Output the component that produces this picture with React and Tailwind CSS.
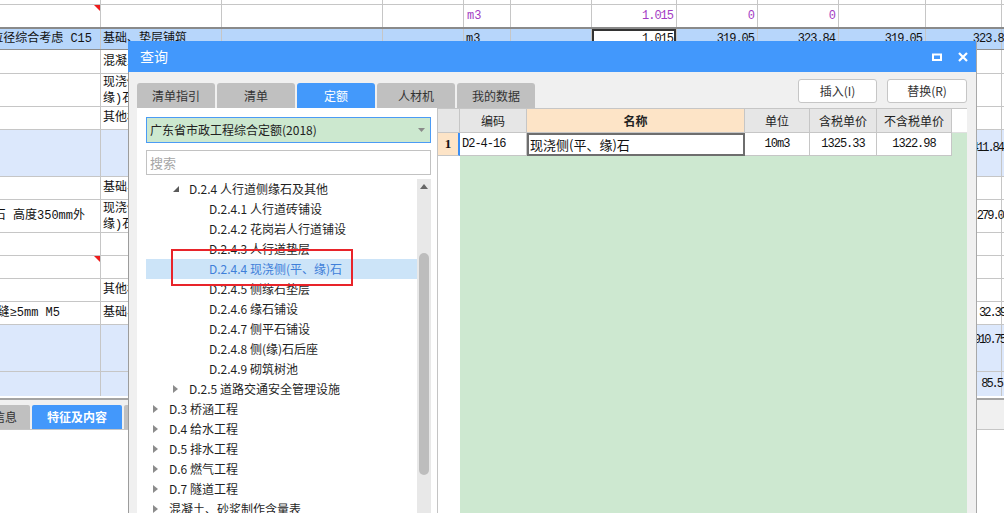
import React from 'react';

const CJK = "font-['Noto_Sans_CJK_SC',sans-serif]";
const BGTXT = "font-['Liberation_Mono','Noto_Sans_CJK_SC',monospace] text-[12px] text-[#111]";
const NUM = "font-['Liberation_Mono',monospace] text-[12px] tracking-[-1px]";
const NUMN = "font-['Liberation_Mono',monospace] text-[12px] tracking-[-2px]";

// columns of the sheet behind the dialog
const COLW = ['w-[101px]', 'w-[121px]', 'w-[161px]', 'w-[81px]', 'w-[47px]', 'w-[81px]', 'w-[85px]', 'w-[81px]', 'w-[81px]', 'w-[87px]', 'w-[76px]', 'w-[40px]'];

const RedMark = () => (
  <svg width="6" height="6" className="absolute top-0 right-0">
    <path d="M0 0 L6 0 L6 6 Z" fill="#ee1c1c" />
  </svg>
);

const L = (t, cls = '') => ({ t, cls: `items-center pl-[2px] ${cls}` });
const R = (t, cls = '') => ({ t: <span className={NUM}>{t}</span>, cls: `items-center justify-end pr-[3px] ${cls}` });
const P = (t) => ({ t: <span className={`${NUM} text-[#a33cc4]`}>{t}</span>, cls: 'items-center justify-end pr-[3px]' });
const TWO = (a, b) => ({ t: <><span>{a}</span><span>{b}</span></>, cls: 'flex-col pt-[1px] pl-[2px] leading-[16px]' });
// last visible column: numbers run up to / past the window edge
const EDGE = (t, mr, cls = 'items-center', font = NUMN) => ({ t: <span className={`${font} ${mr}`}>{t}</span>, cls: `justify-end overflow-visible ${cls}` });

const ROWS = [
  { h: 'h-[5px]', c: {} },
  { h: 'h-[24px]', b: 'border-b-2 border-[#8a8a8a]', c: { 0: { t: <RedMark />, cls: '' }, 4: { t: <span className="text-[#a33cc4]">m3</span>, cls: 'items-center pl-[3px]' }, 6: P('1.015'), 7: P('0'), 8: P('0') } },
  {
    h: 'h-[21px]', bg: 'bg-[#b7d6fb]', b: 'border-b border-[#8e8e8e]', c: {
      0: { t: '土碎石粒径综合考虑 C15', cls: 'items-center justify-end pr-[8px]' },
      1: { t: '基础、垫层铺筑', cls: 'items-center pl-[2px] overflow-visible' },
      4: L('m3'),
      6: { t: <span className={NUM}>1.015</span>, cls: 'items-center justify-end pr-[3px] bg-white ring-2 ring-inset ring-[#333]' },
      7: R('319.05'), 8: R('323.84'), 9: R('319.05'),
      10: EDGE('323.84', '-mr-[9px]', 'items-center', NUM),
    }
  },
  { h: 'h-[24px]', c: { 1: L('混凝土垫层'), 11: L('m') } },
  { h: 'h-[33px]', c: { 1: TWO('现浇侧(平、', '缘)石'), 11: L('m') } },
  { h: 'h-[23px]', c: { 1: L('其他材料费'), 11: L('m') } },
  { h: 'h-[47px]', bg: 'bg-[#dce8fc]', c: { 10: EDGE('411.84', '-mr-[2px]', 'pt-[9px]') } },
  { h: 'h-[23px]', c: { 1: L('基础、垫层'), 11: L('m') } },
  { h: 'h-[33px]', c: { 0: { t: '侧石 高度350mm外', cls: 'items-center justify-end pr-[15px]' }, 1: TWO('现浇侧(平、', '缘)石'), 10: EDGE('279.03', '-mr-[7px]') } },
  { h: 'h-[23px]', c: {} },
  { h: 'h-[23px]', c: { 0: { t: <RedMark />, cls: '' } } },
  { h: 'h-[23px]', c: { 1: L('其他材料费'), 11: L('m') } },
  { h: 'h-[23px]', c: { 0: { t: '勾缝≥5mm M5', cls: 'items-center justify-end pr-[40px]' }, 1: L('基础、垫层'), 10: EDGE('32.39', '-mr-[4px]') } },
  { h: 'h-[47px]', bg: 'bg-[#dce8fc]', c: { 10: EDGE('910.75', '-mr-[4px]', 'pt-[6px]') } },
  { h: 'h-[24px]', bg: 'bg-[#dce8fc]', b: 'border-b-0', c: { 10: EDGE('85.5', '-mr-[1px]') } },
];

const SheetRow = ({ row }) => (
  <div className={`flex shrink-0 ${row.h} ${row.bg || ''} ${row.b || 'border-b border-[#c6c6c6]'}`}>
    {COLW.map((w, i) => {
      const cell = row.c[i];
      return (
        <div key={i} className={`${w} shrink-0 h-full border-r border-[#c6c6c6] relative flex whitespace-nowrap ${cell && cell.cls.includes('overflow-visible') ? '' : 'overflow-hidden'} ${cell ? cell.cls : ''}`}>
          {cell && cell.t}
        </div>
      );
    })}
  </div>
);

const Sheet = () => (
  <div className={`flex flex-col w-[1004px] h-[513px] ${BGTXT}`}>
    {ROWS.map((r, i) => <SheetRow key={i} row={r} />)}
    <div className="h-[2px] bg-white shrink-0" />
    <div className="h-[2px] bg-[#a4a4a4] shrink-0" />
    {/* bottom tabs */}
    <div className={`h-[30px] shrink-0 bg-[#f0f0f0] border-b border-[#c6c6c6] pt-[5px] flex gap-[2px] ${CJK} text-[12px]`}>
      <div className="w-[50px] -ml-[20px] shrink-0 h-[24px] bg-[#c0c0c0] rounded-t-[2px] flex items-center justify-center text-[#333]">信息</div>
      <div className="w-[90px] shrink-0 h-[24px] bg-[#4398fb] rounded-t-[2px] flex items-center justify-center text-white font-bold">特征及内容</div>
      <div className="w-[90px] shrink-0 h-[24px] bg-[#c0c0c0] rounded-t-[2px]" />
    </div>
    <div className="flex-1 bg-white" />
  </div>
);

// ─── tree of the dialog ──────────────────────────────────────────────────────
const TREE = [
  { l: 2, e: 'open', t: 'D.2.4 人行道侧缘石及其他' },
  { l: 3, t: 'D.2.4.1 人行道砖铺设' },
  { l: 3, t: 'D.2.4.2 花岗岩人行道铺设' },
  { l: 3, t: 'D.2.4.3 人行道垫层' },
  { l: 3, t: 'D.2.4.4 现浇侧(平、缘)石', sel: true },
  { l: 3, t: 'D.2.4.5 侧缘石垫层' },
  { l: 3, t: 'D.2.4.6 缘石铺设' },
  { l: 3, t: 'D.2.4.7 侧平石铺设' },
  { l: 3, t: 'D.2.4.8 侧(缘)石后座' },
  { l: 3, t: 'D.2.4.9 砌筑树池' },
  { l: 2, e: 'closed', t: 'D.2.5 道路交通安全管理设施' },
  { l: 1, e: 'closed', t: 'D.3 桥涵工程' },
  { l: 1, e: 'closed', t: 'D.4 给水工程' },
  { l: 1, e: 'closed', t: 'D.5 排水工程' },
  { l: 1, e: 'closed', t: 'D.6 燃气工程' },
  { l: 1, e: 'closed', t: 'D.7 隧道工程' },
  { l: 1, e: 'closed', t: '混凝土、砂浆制作含量表' },
];

const INDENT = { 1: 'w-[7px]', 2: 'w-[27px]', 3: 'w-[47px]' };

const TreeItem = ({ item }) => (
  <div className={`h-[20px] flex items-center shrink-0 ${item.sel ? 'bg-[#cce4f8] text-[#3f7fd9]' : 'text-[#1f1f1f]'}`}>
    <div className={`${INDENT[item.l]} shrink-0`} />
    <div className="w-[16px] shrink-0 flex items-center">
      {item.e === 'closed' && (
        <svg width="5" height="8"><path d="M0 0 L5 4 L0 8 Z" fill="#8c8c8c" /></svg>
      )}
      {item.e === 'open' && (
        <svg width="6" height="6"><path d="M6 0 L6 6 L0 6 Z" fill="#5a5a5a" /></svg>
      )}
    </div>
    <span className="whitespace-nowrap leading-[20px]">{item.t}</span>
  </div>
);

const HEAD = [
  { t: '', w: 'w-[22px]' },
  { t: '编码', w: 'w-[67px]' },
  { t: '名称', w: 'w-[218px]', cls: 'bg-[#fde4c7] font-bold' },
  { t: '单位', w: 'w-[65px]' },
  { t: '含税单价', w: 'w-[67px]' },
  { t: '不含税单价', w: 'w-[75px]' },
];

const QueryDialog = () => (
  <div className={`absolute left-[128px] top-[41px] w-[849px] h-[500px] flex flex-col border-r border-[#a8a8a8] ${CJK}`}>
    {/* title bar */}
    <div className="h-[31px] shrink-0 bg-[#4298fc] flex items-center pl-[12px] pr-[8px]">
      <span className="text-white text-[14px]">查询</span>
      <div className="ml-auto flex items-center gap-[16px]">
        <svg width="10" height="8" viewBox="0 0 10 8">
          <rect x="1" y="1.5" width="8" height="5.5" fill="none" stroke="#fff" strokeWidth="2" />
        </svg>
        <svg width="10" height="10" viewBox="0 0 10 10">
          <path d="M1 1 L9 9 M9 1 L1 9" stroke="#fff" strokeWidth="2.2" />
        </svg>
      </div>
    </div>

    {/* body */}
    <div className="flex-1 flex flex-col bg-[#f0f0f0] border-l border-[#9c9c9c] pl-[8px] pr-[9px] min-h-0">
      <div className="h-[36px] shrink-0 pt-[7px] flex justify-between">
        <div className="flex gap-[2px] self-end text-[12px]">
          {['清单指引', '清单', '定额', '人材机', '我的数据'].map((t) => (
            <div key={t} className={`w-[78px] h-[25px] rounded-t-[3px] flex items-center justify-center ${t === '定额' ? 'bg-[#4399fb] text-white' : 'bg-[#c0c0c0] text-[#333]'}`}>{t}</div>
          ))}
        </div>
        <div className="flex gap-[10px] self-start text-[12px] text-[#333]">
          <button className="w-[79px] h-[24px] bg-white border border-[#c6c6c6] rounded-[3px]">插入(I)</button>
          <button className="w-[80px] h-[24px] bg-white border border-[#c6c6c6] rounded-[3px]">替换(R)</button>
        </div>
      </div>

      <div className="flex-1 flex min-h-0">
        {/* left: library + chapter tree */}
        <div className="w-[301px] shrink-0 bg-white border-r border-[#c4c4c4] pl-[9px] pr-[6px] pt-[9px] flex flex-col">
          <div className="h-[26px] shrink-0 bg-[#cce8cf] border border-[#4b9bf5] flex items-center pl-[3px] pr-[5px] text-[12px] text-[#222]">
            <span>广东省市政工程综合定额(2018)</span>
            <svg width="7" height="4" className="ml-auto"><path d="M0 0 L7 0 L3.5 4 Z" fill="#8a8a8a" /></svg>
          </div>
          <div className="h-[25px] mt-[7px] shrink-0 bg-white border border-[#c2c2c2] flex items-center px-[3px] text-[13px] text-[#a6a6a6]">搜索</div>
          <div className="mt-[4px] flex-1 flex relative min-h-0 text-[12px]">
            <div className="flex-1 flex flex-col overflow-hidden">
              {TREE.map((it) => <TreeItem key={it.t} item={it} />)}
            </div>
            <div className="w-[14px] shrink-0 bg-[#e8e8e8] flex flex-col items-center">
              <svg width="8" height="5" className="mt-[5px] shrink-0"><path d="M0 5 L4 0 L8 5 Z" fill="#666" /></svg>
              <div className="mt-[64px] w-[10px] h-[222px] shrink-0 rounded-full bg-[#bdbdbd]" />
            </div>
            {/* red annotation box */}
            <div className="absolute left-[25px] top-[70px] w-[182px] h-[37px] border-2 border-[#e8242a]" />
          </div>
        </div>

        {/* right: result grid */}
        <div className="w-[529px] shrink-0 flex flex-col">
          <div className="h-[25px] shrink-0 flex border-t border-[#c6c6c6] text-[12px] text-[#222]">
            {HEAD.map((h) => (
              <div key={h.t || 'n'} className={`${h.w} shrink-0 border-r border-b border-[#c6c6c6] flex items-center justify-center ${h.cls || 'bg-[#e6e6e6]'}`}>{h.t}</div>
            ))}
            <div className="flex-1 bg-white border-b border-[#e0e0e0]" />
          </div>
          <div className="h-[23px] shrink-0 flex text-[#111]">
            <div className="w-[22px] shrink-0 bg-[#fde4c7] border-r-2 border-r-[#3b8ef5] border-b border-b-[#c6c6c6] flex items-center justify-center font-['Liberation_Serif',serif] font-bold text-[13px]">1</div>
            <div className="w-[67px] shrink-0 bg-white border-r border-b border-[#c6c6c6] flex items-center pl-[2px]"><span className={NUM}>D2-4-16</span></div>
            <div className="w-[218px] shrink-0 bg-white ring-2 ring-inset ring-[#6e6e6e] flex items-center pl-[3px] text-[13px]">现浇侧(平、缘)石</div>
            <div className="w-[65px] shrink-0 bg-white border-r border-b border-[#c6c6c6] flex items-center justify-center"><span className={NUM}>10m3</span></div>
            <div className="w-[67px] shrink-0 bg-white border-r border-b border-[#c6c6c6] flex items-center justify-center"><span className={NUM}>1325.33</span></div>
            <div className="w-[75px] shrink-0 bg-white border-r border-b border-[#c6c6c6] flex items-center justify-center"><span className={NUM}>1322.98</span></div>
            <div className="flex-1 bg-[#cde8d0]" />
          </div>
          <div className="flex-1 flex">
            <div className="w-[22px] shrink-0 bg-white" />
            <div className="flex-1 bg-[#cde8d0]" />
          </div>
        </div>
      </div>
    </div>
  </div>
);

export default function App() {
  return (
    <div className="relative w-[1004px] h-[513px] overflow-hidden bg-white">
      <Sheet />
      <QueryDialog />
    </div>
  );
}
